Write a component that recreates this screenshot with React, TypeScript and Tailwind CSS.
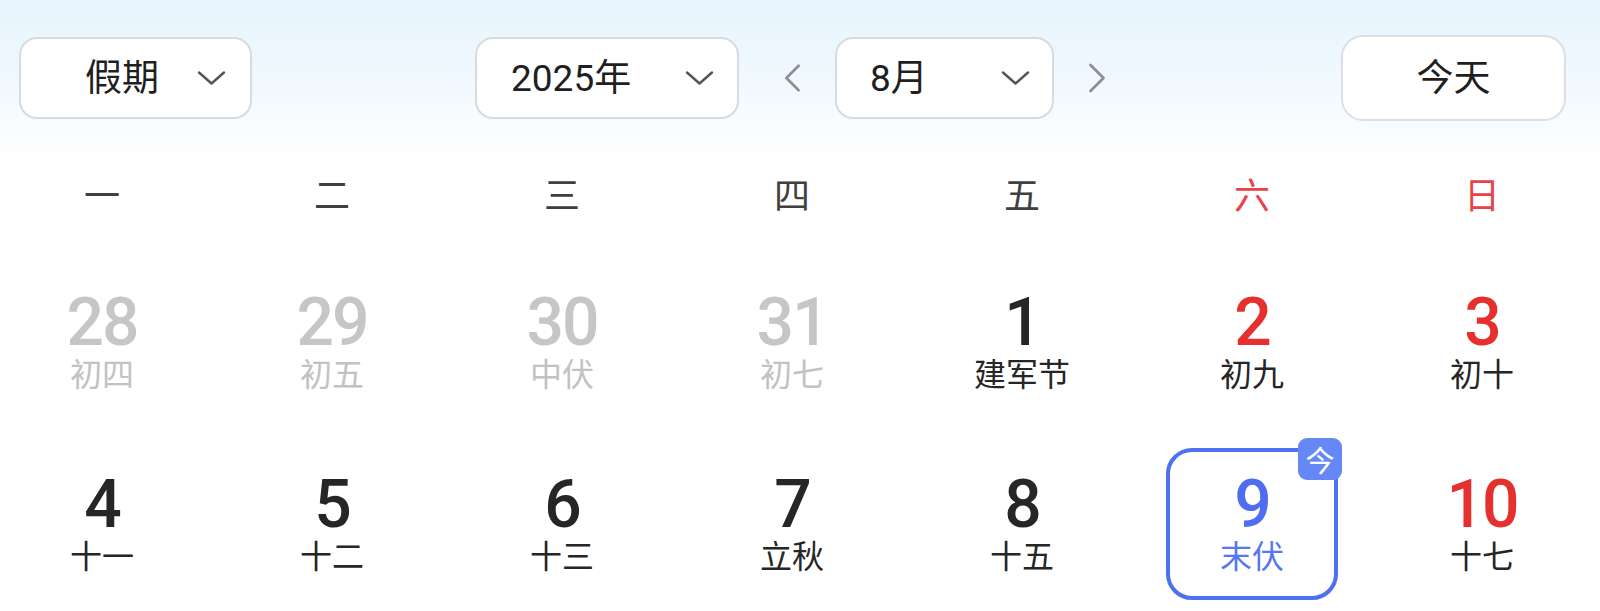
import React from "react";

type Day = {
  n: number;
  lunar: string;
  muted?: boolean;
  weekend?: boolean;
  today?: boolean;
};

const weekdays = ["一", "二", "三", "四", "五", "六", "日"];

const days: Day[] = [
  { n: 28, lunar: "初四", muted: true },
  { n: 29, lunar: "初五", muted: true },
  { n: 30, lunar: "中伏", muted: true },
  { n: 31, lunar: "初七", muted: true },
  { n: 1, lunar: "建军节" },
  { n: 2, lunar: "初九", weekend: true },
  { n: 3, lunar: "初十", weekend: true },
  { n: 4, lunar: "十一" },
  { n: 5, lunar: "十二" },
  { n: 6, lunar: "十三" },
  { n: 7, lunar: "立秋" },
  { n: 8, lunar: "十五" },
  { n: 9, lunar: "末伏", weekend: true, today: true },
  { n: 10, lunar: "十七", weekend: true },
];

const cjk = { fontFamily: '"Noto Sans CJK SC", sans-serif' };

const ChevronDown = () => (
  <svg width="29" height="16" viewBox="0 0 29 16" fill="none">
    <path
      d="M2 2.5 L14.5 13.5 L27 2.5"
      stroke="#50555c"
      strokeWidth="2.4"
      strokeLinecap="round"
      strokeLinejoin="round"
    />
  </svg>
);

const Arrow = ({ dir }: { dir: "left" | "right" }) => (
  <svg width="18" height="30" viewBox="0 0 18 30" fill="none">
    <path
      d={dir === "left" ? "M15.5 2 L2.5 15 L15.5 28" : "M2.5 2 L15.5 15 L2.5 28"}
      stroke="#8a9099"
      strokeWidth="2.8"
      strokeLinecap="round"
      strokeLinejoin="round"
    />
  </svg>
);

const Select = ({
  label,
  className,
}: {
  label: string;
  className: string;
}) => (
  <div
    className={`flex h-[82px] items-center justify-between rounded-[18px] border-2 border-[#d8dbde] bg-white text-[37px] text-[#1f1f1f] ${className}`}
  >
    <span className="leading-none">{label}</span>
    <ChevronDown />
  </div>
);

export default function App() {
  return (
    <div
      className="h-[611px] w-[1600px] overflow-hidden bg-[linear-gradient(to_bottom,#e6f4fd_0px,#f2f9fe_90px,#ffffff_160px)]"
      style={{ fontFamily: 'Roboto, "Noto Sans CJK SC", sans-serif' }}
    >
      <div className="flex items-center pt-[35px]">
        <Select label="假期" className="ml-[19px] w-[233px] pl-[64px] pr-[24px]" />
        <Select label="2025年" className="ml-[223px] w-[264px] pl-[34px] pr-[23px]" />
        <button className="ml-[45px] flex h-[30px] w-[17px] items-center justify-center">
          <Arrow dir="left" />
        </button>
        <Select label="8月" className="ml-[34px] w-[219px] pl-[33px] pr-[22px]" />
        <button className="ml-[34px] flex h-[30px] w-[18px] items-center justify-center">
          <Arrow dir="right" />
        </button>
        <button className="ml-[235px] flex h-[86px] w-[225px] items-center justify-center rounded-[22px] border-2 border-[#dcdee1] bg-white text-[37px] leading-none text-[#1f1f1f]">
          今天
        </button>
      </div>

      <div className="mt-[54px] grid w-[1584px] grid-cols-7 gap-x-[26px]">
        {weekdays.map((w, i) => (
          <div
            key={w}
            className={`text-center text-[36px] leading-[36px] ${i >= 5 ? "text-[#e8434a]" : "text-[#404040]"}`}
            style={cjk}
          >
            {w}
          </div>
        ))}
      </div>

      <div className="mt-[55px] grid w-[1584px] grid-cols-7 justify-items-center gap-x-[26px] gap-y-[30px]">
        {days.map((d) => {
          const numColor = d.today
            ? "text-[#4d6ef0]"
            : d.muted
              ? "text-[#c6c6c6]"
              : d.weekend
                ? "text-[#e5302d]"
                : "text-[#262626]";
          const lunarColor = d.today
            ? "text-[#5577f0]"
            : d.muted
              ? "text-[#c2c2c2]"
              : "text-[#262626]";
          return (
            <div
              key={d.n}
              className={`relative flex h-[152px] w-[172px] flex-col items-center rounded-[26px] border-4 pt-[19.5px] ${d.today ? "border-[#4f70ef]" : "border-transparent"}`}
            >
              <div className={`text-[66px] font-medium leading-[66px] tracking-[-2px] ${numColor}`}>
                {d.n}
              </div>
              <div className={`text-[32px] leading-[32px] ${lunarColor}`} style={cjk}>
                {d.lunar}
              </div>
              {d.today && (
                <div
                  className="absolute -right-[8px] -top-[14px] flex h-[42px] w-[44px] items-center justify-center rounded-[9px] bg-[#6688f6] text-[29px] leading-none text-white"
                  style={cjk}
                >
                  今
                </div>
              )}
            </div>
          );
        })}
      </div>
    </div>
  );
}
